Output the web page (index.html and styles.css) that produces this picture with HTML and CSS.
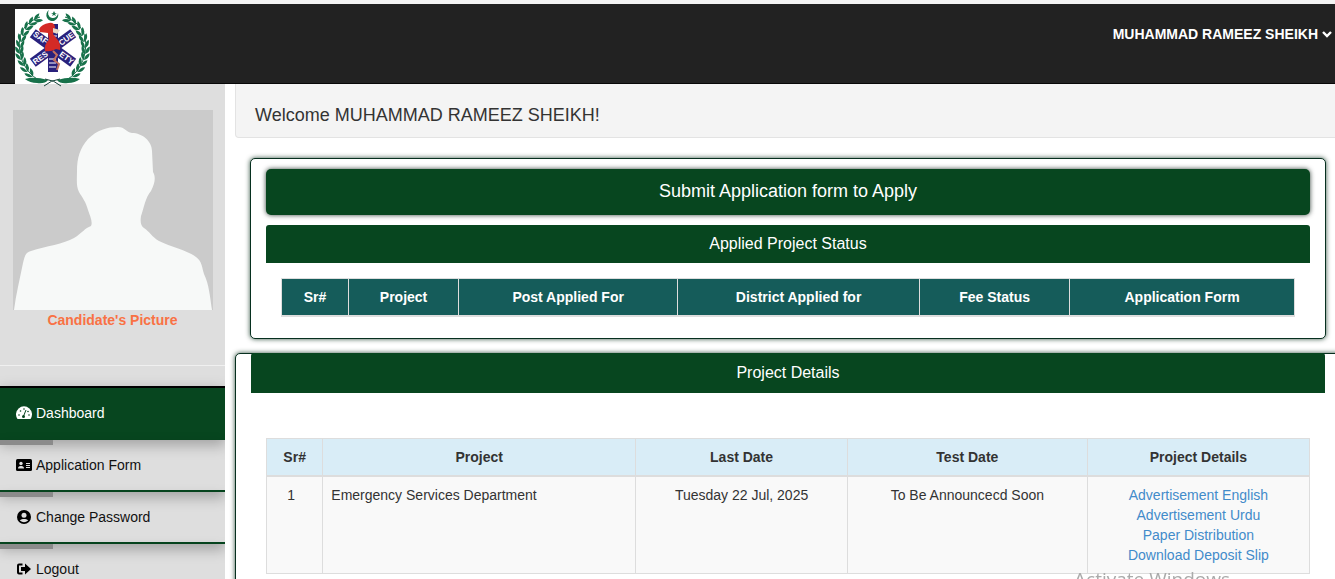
FILE: index.html
```html
<!DOCTYPE html>
<html lang="en">
<head>
    <meta charset="UTF-8">
    <meta name="viewport" content="width=device-width, initial-scale=1.0">
    <title>Dashboard</title>
    <link rel="stylesheet" href="styles.css">
</head>
<body>
    <header class="navbar">
        <a href="#" class="brand" aria-label="Home">
            <svg class="logo" viewBox="0 0 75 78">
                <defs>
                    <path id="leaf" d="M0 1Q-5 -1 -4 -7Q0 -5 0 1ZM0 1Q5 -1 4 -7Q0 -5 0 1Z"/>
                    <g id="branch" fill="#17714a">
                        <path d="M25 8C8 14 2 27 5 43C7 55 13 64 22 70" fill="none" stroke="#17714a" stroke-width="1"/>
                        <use href="#leaf" transform="translate(20 11) rotate(62)"/>
                        <use href="#leaf" transform="translate(15 15) rotate(50)"/>
                        <use href="#leaf" transform="translate(11 20) rotate(38)"/>
                        <use href="#leaf" transform="translate(8 26) rotate(25)"/>
                        <use href="#leaf" transform="translate(6 32) rotate(12)"/>
                        <use href="#leaf" transform="translate(5 38) rotate(2)"/>
                        <use href="#leaf" transform="translate(5 44) rotate(-8)"/>
                        <use href="#leaf" transform="translate(6 50) rotate(-16)"/>
                        <use href="#leaf" transform="translate(9 56) rotate(-24)"/>
                        <use href="#leaf" transform="translate(12 62) rotate(-32)"/>
                        <use href="#leaf" transform="translate(17 67) rotate(-42)"/>
                    </g>
                </defs>
                <rect width="75" height="75" fill="#fff"/>
                <!-- wreath -->
                <use href="#branch"/>
                <use href="#branch" transform="translate(75 0) scale(-1 1)"/>
                <path d="M10 70Q19 67 33 71Q30 75 22 74Q15 74 10 70ZM65 70Q56 67 42 71Q45 75 53 74Q60 74 65 70Z" fill="#17714a"/>
                <path d="M29 77Q36 71 45 70M46 77Q39 71 30 70" fill="none" stroke="#17443a" stroke-width="1"/>
                <path d="M34 1A6 6 0 1 0 43 4A5 5 0 1 1 34 1Z" fill="#17714a"/>
                <path d="M39 2l1 2h2l-2 1 1 2-2-1-2 1 1-2-2-1h2z" fill="#17714a"/>
                <!-- star of life -->
                <g fill="#29217c">
                    <rect x="33" y="15" width="10" height="48"/>
                    <rect x="33" y="14" width="10" height="50" transform="rotate(-54 38 39)"/>
                    <rect x="33" y="14" width="10" height="50" transform="rotate(54 38 39)"/>
                </g>
                <path d="M35 27h7M35 23h7M34 50h7M34 54h7M34 58h7" stroke="#fff" stroke-width="1"/>
                <g class="logo-text">
                    <text transform="translate(24 31) rotate(36)">SAF</text>
                    <text transform="translate(53 32) rotate(-36)">CUE</text>
                    <text transform="translate(27 51) rotate(-36)">RES</text>
                    <text transform="translate(50 51) rotate(36)">ETY</text>
                </g>
                <path d="M24 20Q27 15 34 14Q39 13 40 18L38 25L42 30Q46 34 45 41L41 40Q36 43 30 42Q29 35 34 31L33 24L25 23Z" fill="#d42a26"/>
                <path d="M38 19L45 21L42 25L38 23Z" fill="#e9d7c3"/>
                <path d="M38 42L42 46L39 51L44 55L42 61" fill="none" stroke="#c3705f" stroke-width="2"/>
            </svg>
        </a>
        <button type="button" class="user-menu">MUHAMMAD RAMEEZ SHEIKH
            <svg viewBox="0 0 10 8" class="chevron"><path d="M1 2l4 4 4-4" fill="none" stroke="#fff" stroke-width="2.400"/></svg>
        </button>
    </header>

    <div class="wrapper">
        <aside class="sidebar">
            <div class="profile">
                <svg class="avatar" viewBox="0 0 200 200" role="img" aria-label="Candidate">
                    <rect width="200" height="200" fill="#cbcbcb"/>
                    <path d="M1 200C3 184 7 168 10 153C12 145 13 142 18 141C33 136 51 134 61 128C69 123 72 118 78 116C80 112 77 106 75 100C73 92 69 87 66 82C63 76 64 70 64 61C64 48 67 38 75 29C84 20 94 17 105 17C112 17 113 22 119 23C129 23 139 31 139 41L140 62C143 67 142 73 138 81C132 88 131 98 128 106C127 112 128 116 131 118C137 122 139 127 146 131C158 137 176 141 183 147C189 151 189 158 191 164C196 174 197 187 199 200Z" fill="#f7f9f8"/>
                </svg>
                <p class="caption">Candidate's Picture</p>
            </div>
            <nav class="side-nav">
                <a href="#" class="side-link active">
                    <svg class="icon" viewBox="0 0 16 14">
                        <path d="M1.500 13A8 8 0 1 1 14.500 13Z" fill="#fff"/>
                        <path d="M7.600 10L10 4" stroke="#07461f" stroke-width="1"/>
                        <g fill="#07461f"><circle cx="7.500" cy="10.500" r="1.500"/><circle cx="3" cy="9" r=".8"/><circle cx="4.500" cy="5" r=".8"/><circle cx="8" cy="3" r=".8"/><circle cx="12" cy="5.500" r=".8"/><circle cx="13" cy="9" r=".8"/></g>
                    </svg>
                    Dashboard
                </a>
                <a href="#" class="side-link">
                    <svg class="icon" viewBox="0 0 16 14">
                        <rect y="1" width="16" height="12" rx="1.500" fill="#000"/>
                        <path d="M10 5.500h4M10 7.500h4M10 9.500h4" stroke="#dedede" stroke-width="1"/>
                        <circle cx="5" cy="5.500" r="1.700" fill="#dedede"/>
                        <path d="M2 10.500Q2 7.800 5 8Q8 7.800 8 10.500Z" fill="#dedede"/>
                    </svg>
                    Application Form
                </a>
                <a href="#" class="side-link">
                    <svg class="icon" viewBox="0 0 16 14">
                        <circle cx="8" cy="7" r="7" fill="#000"/>
                        <circle cx="8" cy="5.200" r="2.500" fill="#dedede"/>
                        <path d="M3.800 10.500Q5 8.500 8 9Q11 8.500 12.200 10.500Q8 14 3.800 10.500Z" fill="#dedede"/>
                    </svg>
                    Change Password
                </a>
                <a href="#" class="side-link">
                    <svg class="icon" viewBox="0 0 16 14">
                        <path d="M6.500 2.500H3Q2 2.500 2 3.500V10.500Q2 11.500 3 11.500H6.500" fill="none" stroke="#000" stroke-width="2"/>
                        <path d="M5 5h4V1.500L15 7L9 12.500V9H5Z" fill="#000"/>
                    </svg>
                    Logout
                </a>
            </nav>
        </aside>

        <main class="content">
            <div class="welcome">Welcome MUHAMMAD RAMEEZ SHEIKH!</div>

            <section class="panel status-panel">
                <button type="button" class="submit-btn">Submit Application form to Apply</button>
                <h2 class="panel-title">Applied Project Status</h2>
                <div class="table-wrap">
                    <table class="table status-table">
                        <thead>
                            <tr>
                                <th class="col-sr">Sr#</th>
                                <th class="col-project">Project</th>
                                <th class="col-post">Post Applied For</th>
                                <th class="col-district">District Applied for</th>
                                <th class="col-fee">Fee Status</th>
                                <th>Application Form</th>
                            </tr>
                        </thead>
                    </table>
                </div>
            </section>

            <section class="panel details-panel">
                <h2 class="panel-title">Project Details</h2>
                <div class="table-wrap">
                    <table class="table details-table">
                        <thead>
                            <tr>
                                <th class="col-sr">Sr#</th>
                                <th class="col-project">Project</th>
                                <th class="col-last">Last Date</th>
                                <th class="col-test">Test Date</th>
                                <th>Project Details</th>
                            </tr>
                        </thead>
                        <tbody>
                            <tr>
                                <td>1</td>
                                <td class="name">Emergency Services Department</td>
                                <td>Tuesday 22 Jul, 2025</td>
                                <td>To Be Announcecd Soon</td>
                                <td>
                                    <a href="#">Advertisement English</a>
                                    <a href="#">Advertisement Urdu</a>
                                    <a href="#">Paper Distribution</a>
                                    <a href="#">Download Deposit Slip</a>
                                </td>
                            </tr>
                        </tbody>
                    </table>
                </div>
            </section>
        </main>
    </div>

    <div class="watermark">Activate Windows</div>
</body>
</html>
```

FILE: styles.css
```css
* {
    box-sizing: border-box;
}

body {
    margin: 0;
    height: 100vh;
    overflow: hidden;
    border-top: 4px solid #f4f4f4;
    background-color: #fff;
    color: #333;
    font-family: Arial, 'Liberation Sans', sans-serif;
    font-size: 14px;
    line-height: 20px;
}

a {
    color: #428bca;
    text-decoration: none;
}

/* header */
.navbar {
    display: flex;
    justify-content: space-between;
    align-items: flex-start;
    height: 80px;
    padding: 5px 3px 0 15px;
    background-color: #222;
    border-bottom: 1px solid #080808;
}

.brand {
    position: relative;
    z-index: 2;
}

.logo {
    display: block;
    width: 75px;
    height: 78px;
}

.logo-text {
    fill: #fff;
    font-size: 8px;
    font-weight: bold;
    text-anchor: middle;
}

.user-menu {
    display: flex;
    align-items: center;
    gap: 4px;
    margin-top: 15px;
    padding: 0;
    border: none;
    background: none;
    color: #fff;
    font: inherit;
    font-weight: bold;
    cursor: pointer;
}

.chevron {
    width: 10px;
    height: 8px;
}

.wrapper {
    display: flex;
    align-items: flex-start;
}

/* sidebar */
.sidebar {
    flex: 0 0 225px;
    min-height: 100vh;
    background-color: #dedede;
    overflow: hidden;
}

.profile {
    height: 282px;
    padding: 26px 13px 0;
    border-bottom: 1px solid #f0f0f0;
}

.avatar {
    display: block;
    width: 200px;
    height: 200px;
}

.caption {
    margin: 0;
    color: #f97144;
    font-weight: bold;
    text-align: center;
}

.side-nav {
    margin-top: 20px;
    border-top: 2px solid #000;
    box-shadow: 0 0 12px rgba(0, 0, 0, 0.1);
}

.side-link {
    position: relative;
    display: flex;
    align-items: center;
    gap: 4px;
    height: 52px;
    padding-left: 16px;
    border-bottom: 2px solid #07461f;
    color: #111;
    box-shadow: 0 6px 12px rgba(0, 0, 0, 0.25);
}

.side-link.active {
    background-color: #07461f;
    color: #fff;
}

/* dark tab under the previous item */
.side-link:not(.active)::before {
    content: '';
    position: absolute;
    top: 0;
    left: 0;
    width: 53px;
    height: 5px;
    background-color: #8b8b8b;
}

.icon {
    width: 16px;
    height: 14px;
}

/* content */
.content {
    flex: 1;
    min-width: 0;
    margin-right: -6px;
    padding-left: 10px;
}

.welcome {
    padding: 21px 19px 11px;
    background-color: #f4f4f4;
    border: 1px solid #e3e3e3;
    border-top: none;
    border-radius: 0 0 4px 4px;
    font-size: 18px;
    line-height: 21px;
}

.panel {
    border: 1px solid #07301f;
    border-radius: 5px;
    background-color: #fff;
    box-shadow: 0 0 5px rgba(0, 40, 20, 0.8);
}

.status-panel {
    margin: 20px 15px 14px;
    padding: 10px 15px 6px;
}

.submit-btn {
    display: block;
    width: 100%;
    margin-bottom: 10px;
    padding: 12px 15px 14px;
    border: none;
    border-radius: 5px;
    background-color: #07461f;
    box-shadow: 0 0 5px rgba(0, 20, 10, 0.8);
    color: #fff;
    font-family: inherit;
    font-size: 18px;
    line-height: 20px;
    cursor: pointer;
}

.panel-title {
    margin: 0;
    padding: 9px 15px;
    border-radius: 3px 3px 0 0;
    background-color: #07461f;
    color: #fff;
    font-size: 16px;
    font-weight: normal;
    text-align: center;
}

.table-wrap {
    padding: 15px;
}

.table {
    width: 100%;
    border-collapse: collapse;
    table-layout: fixed;
    text-align: center;
}

.table th,
.table td {
    padding: 8px;
    border: 1px solid #ddd;
    vertical-align: top;
}

.table thead th {
    border-bottom-width: 2px;
}

.status-table th {
    background-color: #155c5a;
    color: #fff;
}

.status-table .col-sr {
    width: 6.6%;
}

.status-table .col-project {
    width: 10.9%;
}

.status-table .col-post {
    width: 21.6%;
}

.status-table .col-district {
    width: 23.9%;
}

.status-table .col-fee {
    width: 14.8%;
}

.details-panel {
    padding: 0 15px;
}

/* the bar covers the panel's top border */
.details-panel .panel-title {
    margin-top: -1px;
    padding: 10px 15px;
}

.details-panel .table-wrap {
    padding-top: 45px;
}

.details-table th {
    background-color: #d9edf7;
}

.details-table td {
    background-color: #f9f9f9;
}

.details-table .col-sr {
    width: 5.4%;
}

.details-table .col-project {
    width: 30%;
}

.details-table .col-last {
    width: 20.3%;
}

.details-table .col-test {
    width: 23%;
}

.details-table td:first-child {
    padding-right: 15px;
}

.details-table .name {
    text-align: left;
}

.details-table td a {
    display: block;
}

.watermark {
    position: fixed;
    right: 105px;
    bottom: -13px;
    color: #aaa;
    font-family: 'Segoe UI', 'Open Sans', sans-serif;
    font-size: 19px;
    line-height: 26px;
    pointer-events: none;
}
```
